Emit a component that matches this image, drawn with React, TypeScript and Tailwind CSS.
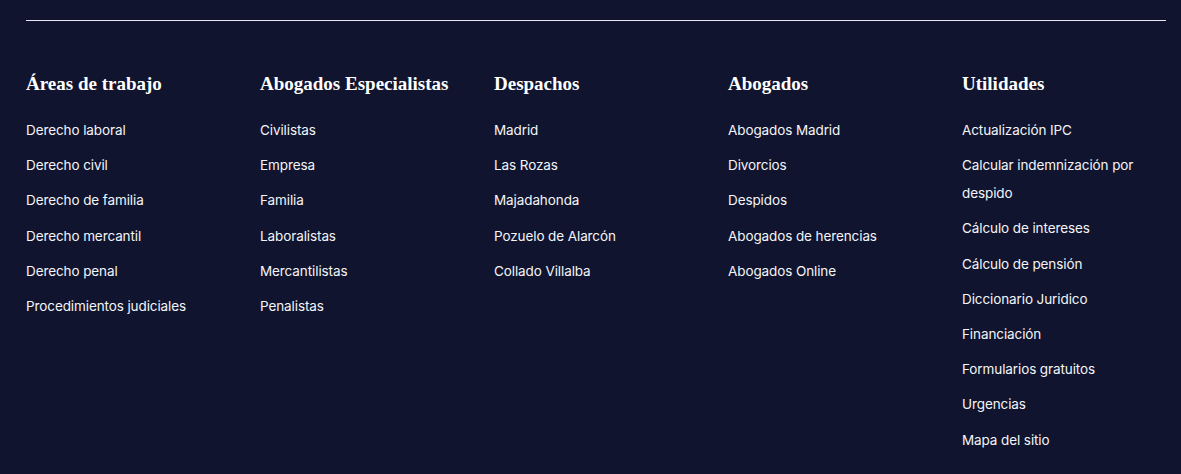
const columns: { title: string; links: string[] }[] = [
  {
    title: "Áreas de trabajo",
    links: [
      "Derecho laboral",
      "Derecho civil",
      "Derecho de familia",
      "Derecho mercantil",
      "Derecho penal",
      "Procedimientos judiciales",
    ],
  },
  {
    title: "Abogados Especialistas",
    links: ["Civilistas", "Empresa", "Familia", "Laboralistas", "Mercantilistas", "Penalistas"],
  },
  {
    title: "Despachos",
    links: ["Madrid", "Las Rozas", "Majadahonda", "Pozuelo de Alarcón", "Collado Villalba"],
  },
  {
    title: "Abogados",
    links: ["Abogados Madrid", "Divorcios", "Despidos", "Abogados de herencias", "Abogados Online"],
  },
  {
    title: "Utilidades",
    links: [
      "Actualización IPC",
      "Calcular indemnización por despido",
      "Cálculo de intereses",
      "Cálculo de pensión",
      "Diccionario Juridico",
      "Financiación",
      "Formularios gratuitos",
      "Urgencias",
      "Mapa del sitio",
    ],
  },
];

export default function App() {
  return (
    <footer className="min-h-[474px] w-full bg-[#10142e] pl-[26px] pr-[15px] pt-5 pb-6 font-['Inter','Liberation_Sans',sans-serif] text-white">
      <div className="border-t border-[#e8e8f4]" />
      <div className="mt-[51px] grid grid-cols-5 gap-x-[30px]">
        {columns.map((col) => (
          <div key={col.title}>
            <h3 className="whitespace-nowrap font-['Liberation_Serif',serif] text-[19px] font-bold leading-6 text-white">
              {col.title}
            </h3>
            <ul className="mt-[20px] flex flex-col gap-[7.2px]">
              {col.links.map((link) => (
                <li key={link}>
                  <a href="#" className="text-[13.5px] leading-7 tracking-[-0.1px] text-[#f4f4f8]">
                    {link}
                  </a>
                </li>
              ))}
            </ul>
          </div>
        ))}
      </div>
    </footer>
  );
}
